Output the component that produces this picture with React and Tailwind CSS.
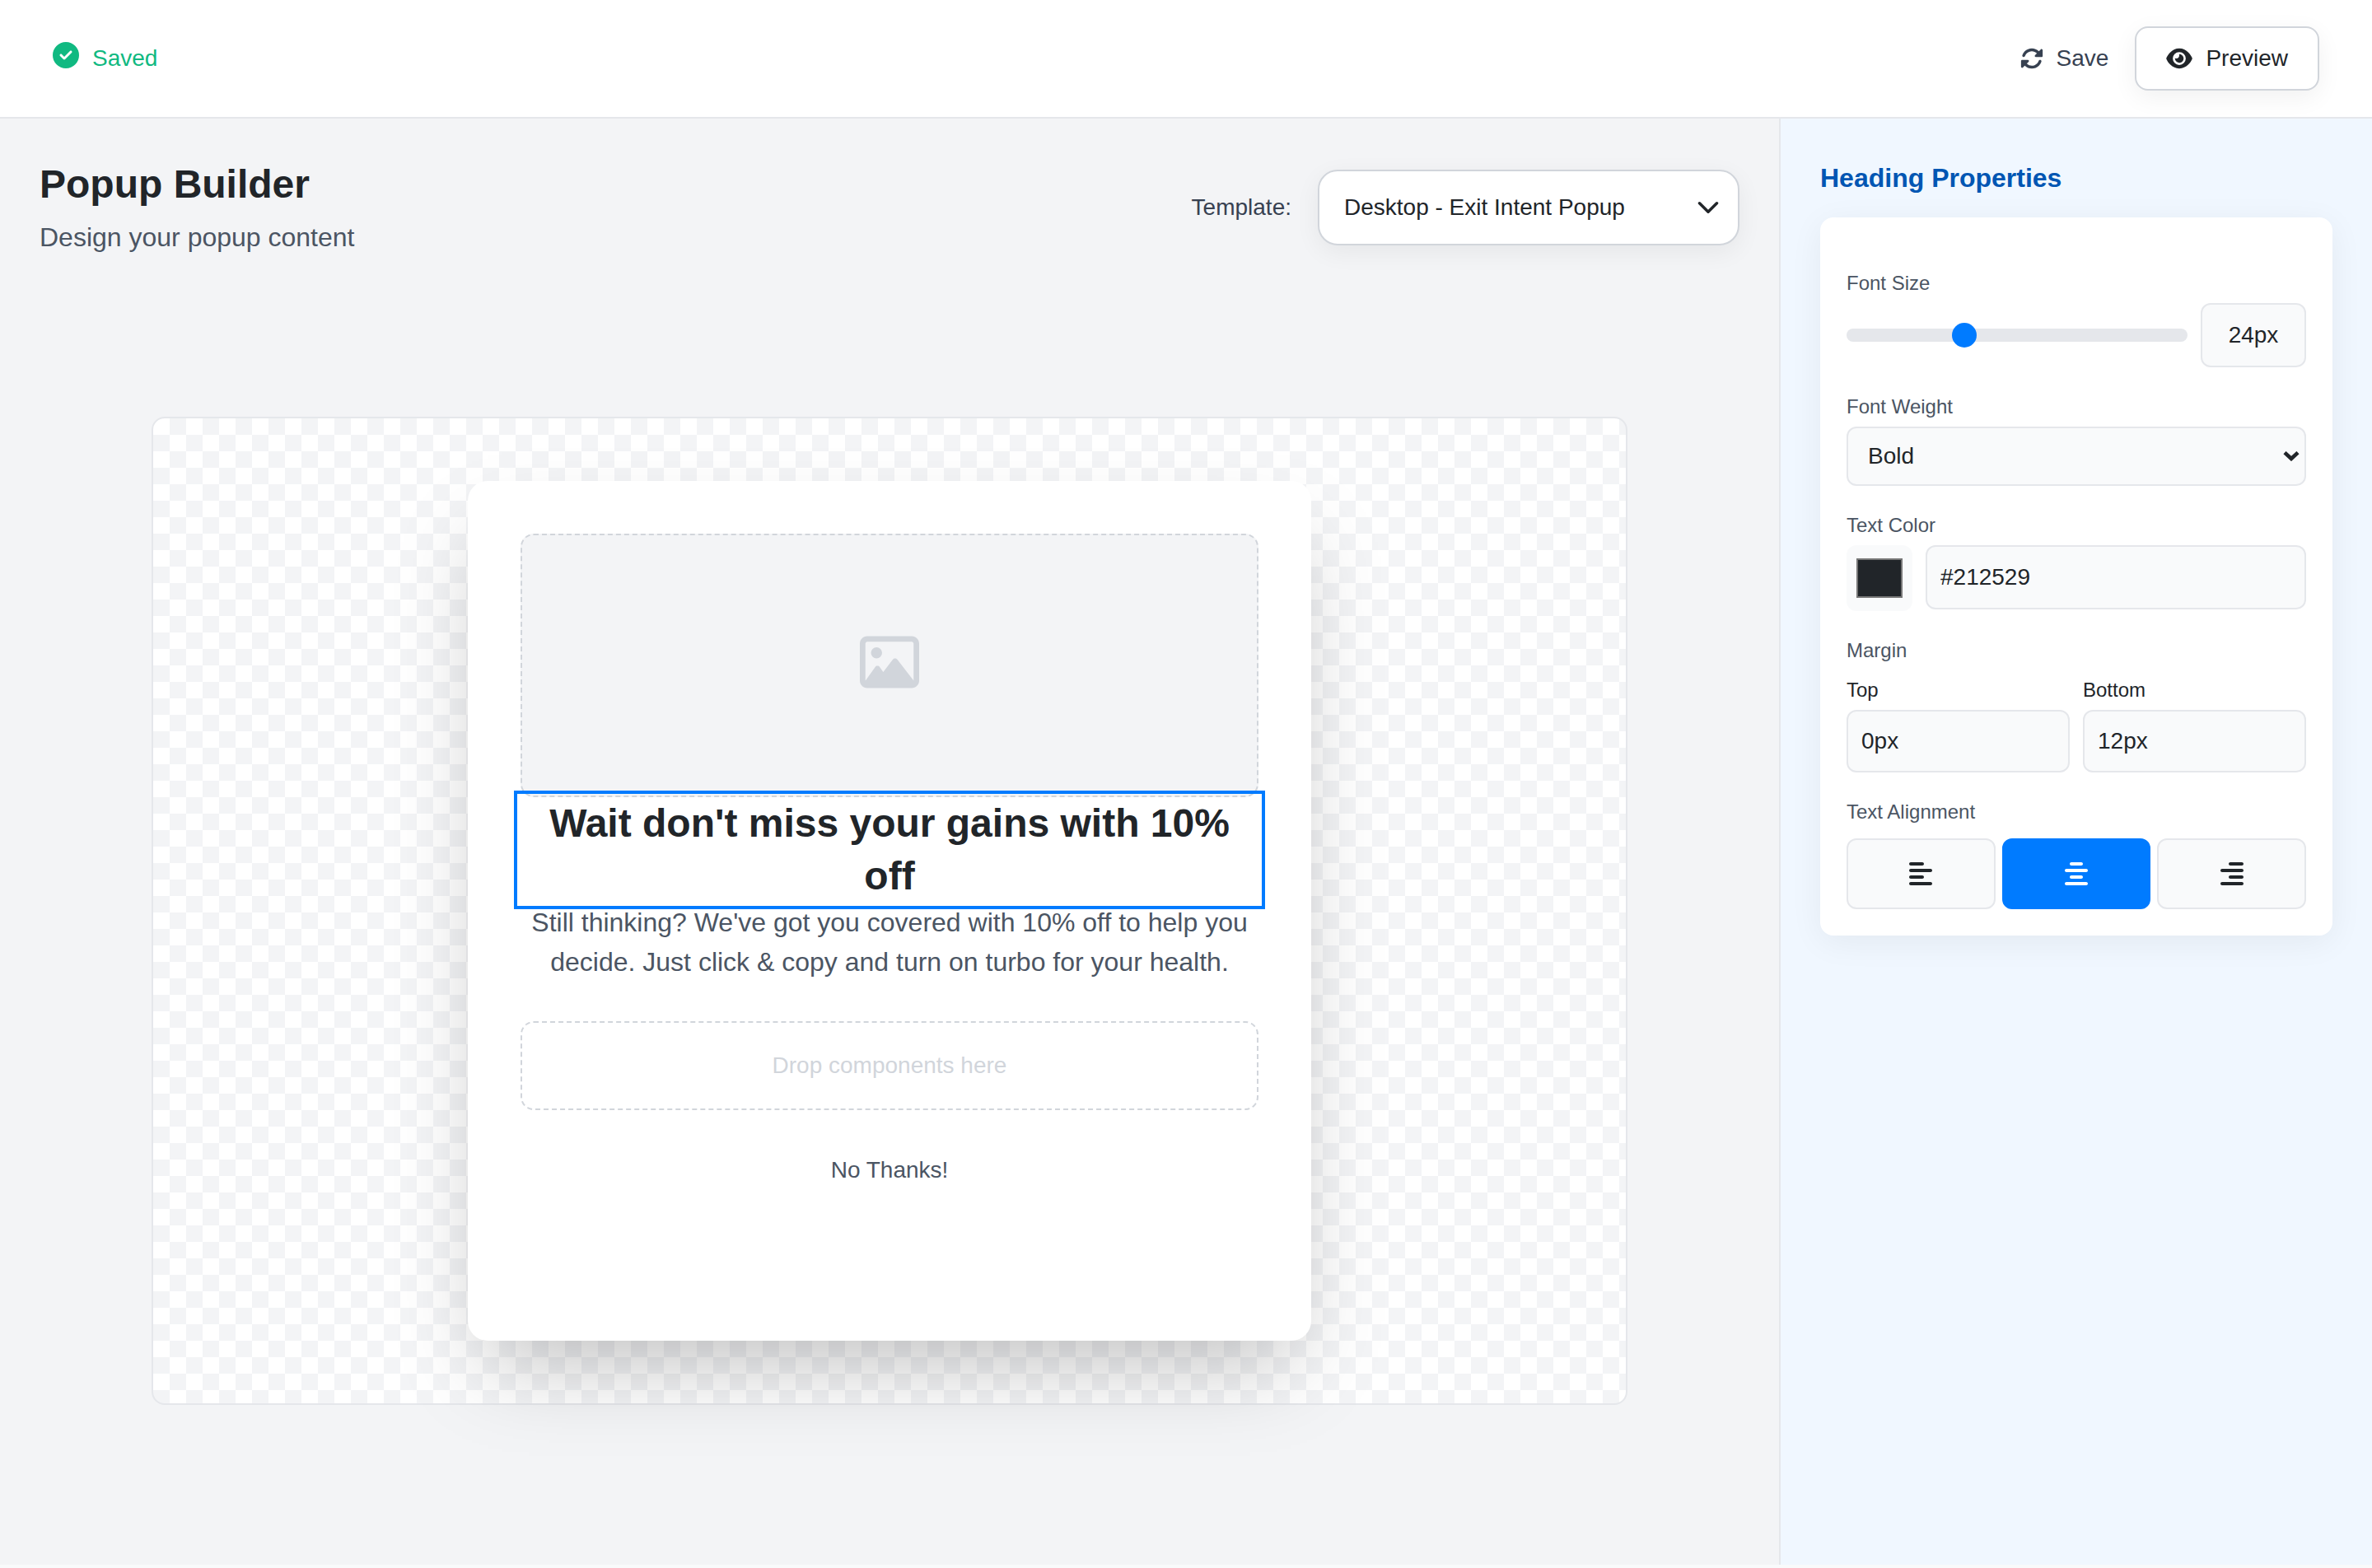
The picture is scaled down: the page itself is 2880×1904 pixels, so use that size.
import { useState } from "react";
import {
  FaAlignCenter,
  FaAlignLeft,
  FaAlignRight,
  FaCircleCheck,
  FaEye,
  FaRegImage,
  FaRotate,
} from "react-icons/fa6";

const FIELD =
  "min-w-0 rounded-xl border-2 border-gray-200 bg-gray-50 text-[28px] text-[#212529] outline-none";

const ALIGNMENTS = [
  { value: "left", label: "Align left", Icon: FaAlignLeft },
  { value: "center", label: "Align center", Icon: FaAlignCenter },
  { value: "right", label: "Align right", Icon: FaAlignRight },
];

function TopBar() {
  return (
    <header className="flex items-center justify-between border-b-2 border-gray-200 bg-white px-16 py-8 text-[28px] leading-10">
      <div className="flex items-start gap-4 text-emerald-500">
        <FaCircleCheck className="size-8 text-[#10b981]" aria-hidden="true" />
        <span className="text-[#10b981]">Saved</span>
      </div>
      <div className="flex items-center gap-8">
        <button type="button" className="flex items-center gap-4 text-[#374151]">
          <FaRotate className="size-7" aria-hidden="true" />
          Save
        </button>
        <button
          type="button"
          className="flex h-[78px] items-center gap-4 rounded-2xl border-2 border-[#d1d5db] bg-white px-9 text-[#212529] shadow-[0_8px_30px_rgba(0,0,0,0.06)]"
        >
          <FaEye className="h-7 w-8" aria-hidden="true" />
          Preview
        </button>
      </div>
    </header>
  );
}

function TemplatePicker() {
  return (
    <div className="flex items-center gap-8">
      <label htmlFor="template" className="text-[28px] leading-10 text-[#374151]">
        Template:
      </label>
      <div className="relative w-[512px]">
        <select
          id="template"
          className="h-[92px] w-full appearance-none rounded-3xl border-2 border-[#d1d5db] bg-white pr-16 pl-[30px] text-[28px] text-[#212529] shadow-[0_8px_30px_rgba(0,0,0,0.06)] outline-none"
        >
          <option>Desktop - Exit Intent Popup</option>
          <option>Mobile - Exit Intent Popup</option>
        </select>
        <svg
          viewBox="0 0 16 16"
          className="pointer-events-none absolute inset-y-0 right-6 my-auto size-7"
          fill="none"
          stroke="#212529"
          strokeWidth="2"
          strokeLinecap="round"
          strokeLinejoin="round"
          aria-hidden="true"
        >
          <path d="m2 5 6 6 6-6" />
        </svg>
      </div>
    </div>
  );
}

function PopupPreview() {
  return (
    <div className="w-full max-w-[1792px] rounded-2xl border-2 border-gray-200 bg-white bg-[linear-gradient(45deg,#f3f4f6_25%,transparent_25%),linear-gradient(-45deg,#f3f4f6_25%,transparent_25%),linear-gradient(45deg,transparent_75%,#f3f4f6_75%),linear-gradient(-45deg,transparent_75%,#f3f4f6_75%)] bg-[length:40px_40px] bg-[position:0_0,0_20px,20px_-20px,-20px_0] px-8 py-19">
      <div className="mx-auto min-h-[1044px] max-w-[1024px] rounded-3xl bg-white p-16 text-center shadow-[0_50px_100px_-24px_rgba(0,0,0,0.25)]">
        <div className="flex h-80 items-center justify-center rounded-2xl border-2 border-dashed border-[#d1d5db] bg-[#f3f4f6] pb-2">
          <FaRegImage className="size-18 text-[#d1d5db]" aria-label="Image placeholder" />
        </div>
        <h2 className="text-5xl leading-16 font-bold text-[#212529] outline-4 outline-offset-4 outline-[#007bff]">
          Wait don't miss your gains with 10% off
        </h2>
        <p className="text-[32px] leading-12 text-[#4b5563]">
          Still thinking? We've got you covered with 10% off to help you decide. Just click &amp;
          copy and turn on turbo for your health.
        </p>
        <div className="mt-12 flex h-[108px] items-center justify-center rounded-2xl border-2 border-dashed border-[#d1d5db] text-[28px] text-[#d1d5db]">
          Drop components here
        </div>
        <button type="button" className="mt-12 h-[50px] text-[28px] text-[#4b5563]">
          No Thanks!
        </button>
      </div>
    </div>
  );
}

function Label({ htmlFor, children }) {
  return (
    <label htmlFor={htmlFor} className="block text-2xl leading-8 text-[#4b5563]">
      {children}
    </label>
  );
}

function HeadingProperties() {
  const [size, setSize] = useState(24);
  const [color, setColor] = useState("#212529");
  const [align, setAlign] = useState("center");

  return (
    <aside className="border-l-2 border-gray-200 bg-[#f0f7ff] p-12">
      <h2 className="text-[32px] leading-12 font-bold text-[#0056b3]">Heading Properties</h2>
      <form className="mt-6 flex flex-col gap-8 rounded-2xl bg-white p-8 pt-16 shadow-[0_8px_40px_rgba(0,0,0,0.06)]">
        <div className="flex flex-col gap-2">
          <Label htmlFor="font-size">Font Size</Label>
          <div className="flex items-center gap-4">
            <input
              id="font-size"
              type="range"
              min="12"
              max="48"
              value={size}
              onChange={(e) => setSize(e.target.value)}
              className="h-4 min-w-0 flex-1 appearance-none rounded-lg bg-gray-200 [&::-webkit-slider-thumb]:size-[30px] [&::-webkit-slider-thumb]:appearance-none [&::-webkit-slider-thumb]:rounded-full [&::-webkit-slider-thumb]:bg-[#007bff]"
            />
            <input
              type="text"
              aria-label="Font size value"
              value={`${size}px`}
              onChange={(e) => setSize(parseInt(e.target.value, 10) || 12)}
              className={`${FIELD} h-[78px] w-32 text-center`}
            />
          </div>
        </div>

        <div className="flex flex-col gap-2">
          <Label htmlFor="font-weight">Font Weight</Label>
          <div className="relative">
            <select
              id="font-weight"
              defaultValue="Bold"
              className={`${FIELD} h-18 w-full appearance-none px-6`}
            >
              <option>Normal</option>
              <option>Medium</option>
              <option>Bold</option>
            </select>
            <svg
              viewBox="0 0 20 12"
              className="pointer-events-none absolute inset-y-0 right-2 my-auto h-3 w-5"
              fill="none"
              stroke="#212529"
              strokeWidth="4.6"
              aria-hidden="true"
            >
              <path d="M2 1.6 10 9 18 1.6" />
            </svg>
          </div>
        </div>

        <div className="flex flex-col gap-2">
          <Label htmlFor="text-color">Text Color</Label>
          <div className="flex items-start gap-4">
            <input
              id="text-color"
              type="color"
              value={color}
              onChange={(e) => setColor(e.target.value)}
              className="size-20 shrink-0 rounded-xl bg-gray-50 px-3 py-4 [&::-webkit-color-swatch]:rounded-none [&::-webkit-color-swatch]:border-2 [&::-webkit-color-swatch]:border-[#777777] [&::-webkit-color-swatch-wrapper]:p-0"
            />
            <input
              type="text"
              aria-label="Text color value"
              value={color}
              onChange={(e) => setColor(e.target.value)}
              className={`${FIELD} h-[78px] flex-1 px-4`}
            />
          </div>
        </div>

        <fieldset>
          <legend className="text-2xl leading-8 text-[#4b5563]">Margin</legend>
          <div className="mt-4 grid grid-cols-2 gap-4">
            <label className="flex flex-col gap-2 text-2xl leading-8 text-[#212529]">
              Top
              <input type="text" defaultValue="0px" className={`${FIELD} h-[76px] px-4`} />
            </label>
            <label className="flex flex-col gap-2 text-2xl leading-8 text-[#212529]">
              Bottom
              <input type="text" defaultValue="12px" className={`${FIELD} h-[76px] px-4`} />
            </label>
          </div>
        </fieldset>

        <fieldset>
          <legend className="text-2xl leading-8 text-[#4b5563]">Text Alignment</legend>
          <div className="mt-4 grid grid-cols-3 gap-2">
            {ALIGNMENTS.map(({ value, label, Icon }) => (
              <button
                key={value}
                type="button"
                aria-label={label}
                aria-pressed={align === value}
                onClick={() => setAlign(value)}
                className={`flex h-[86px] items-center justify-center rounded-xl border-2 ${
                  align === value
                    ? "border-[#007bff] bg-[#007bff] text-white"
                    : "border-gray-200 bg-gray-50 text-[#212529]"
                }`}
              >
                <Icon className="h-8 w-7" aria-hidden="true" />
              </button>
            ))}
          </div>
        </fieldset>
      </form>
    </aside>
  );
}

export default function App() {
  return (
    <div className="flex min-h-screen flex-col bg-[#f9fafb] pb-1 font-['Liberation_Sans',Arial,sans-serif]">
      <TopBar />
      <div className="grid flex-1 grid-cols-[3fr_1fr]">
        <main className="flex flex-col bg-[#f3f4f6] px-12 pt-12">
          <div className="flex items-center justify-between">
            <div className="flex flex-col gap-2">
              <h1 className="text-5xl leading-16 font-bold text-[#212529]">Popup Builder</h1>
              <p className="text-[32px] leading-12 text-[#4b5563]">Design your popup content</p>
            </div>
            <TemplatePicker />
          </div>
          <div className="flex flex-1 items-center justify-center py-12">
            <PopupPreview />
          </div>
        </main>
        <HeadingProperties />
      </div>
    </div>
  );
}
